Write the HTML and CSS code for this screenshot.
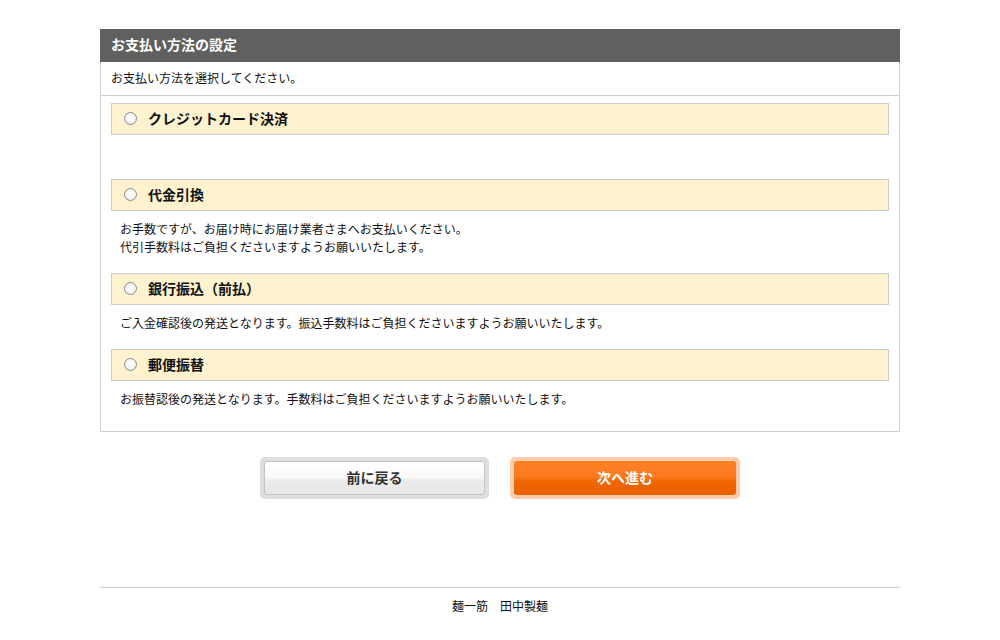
FILE: index.html
```html
<!DOCTYPE html>
<html lang="ja">
<head>
<meta charset="utf-8">
<title>お支払い方法の設定</title>
<link rel="stylesheet" href="styles.css">
</head>
<body>
<div class="page">
  <section class="panel">
    <h2 class="panel-title">お支払い方法の設定</h2>
    <p class="panel-lead">お支払い方法を選択してください。</p>
    <div class="methods">
      <div class="method">
        <label class="method-head"><span class="radio"></span><span class="method-name">クレジットカード決済</span></label>
        <div class="method-desc">&nbsp;</div>
      </div>
      <div class="method">
        <label class="method-head"><span class="radio"></span><span class="method-name">代金引換</span></label>
        <div class="method-desc">お手数ですが、お届け時にお届け業者さまへお支払いください。<br>代引手数料はご負担くださいますようお願いいたします。</div>
      </div>
      <div class="method">
        <label class="method-head"><span class="radio"></span><span class="method-name">銀行振込（前払）</span></label>
        <div class="method-desc">ご入金確認後の発送となります。振込手数料はご負担くださいますようお願いいたします。</div>
      </div>
      <div class="method">
        <label class="method-head"><span class="radio"></span><span class="method-name">郵便振替</span></label>
        <div class="method-desc">お振替認後の発送となります。手数料はご負担くださいますようお願いいたします。</div>
      </div>
    </div>
  </section>
  <div class="actions">
    <button class="btn btn-back" type="button"><span class="btn-inner">前に戻る</span></button>
    <button class="btn btn-next" type="button"><span class="btn-inner">次へ進む</span></button>
  </div>
  <footer class="footer">麺一筋　田中製麺</footer>
</div>
</body>
</html>
```

FILE: styles.css
```css
* { box-sizing: border-box; }
html, body { margin: 0; padding: 0; background: #fff; }
body {
  font-family: "Noto Sans CJK JP", "Noto Sans", sans-serif;
  color: #111;
  font-size: 12px;
}
.page {
  width: 800px;
  margin: 0 auto;
  padding-top: 29px;
}
.panel {
  border: 1px solid #cccccc;
  border-top: none;
}
.panel-title {
  margin: 0 -1px;
  background: #606060;
  color: #fff;
  font-size: 14px;
  font-weight: bold;
  height: 33px;
  line-height: 31px;
  padding: 0 11px;
}
.panel-lead {
  margin: 0;
  height: 34px;
  line-height: 31px;
  padding: 0 10px;
  border-bottom: 1px solid #cccccc;
  font-size: 12px;
}
.methods {
  padding: 7px 10px 6px 10px;
}
.method-head {
  display: flex;
  align-items: center;
  height: 32px;
  background: #fff3cf;
  border: 1px solid #cccccc;
  padding-left: 12px;
}
.radio {
  width: 13px;
  height: 13px;
  border-radius: 50%;
  border: 1px solid #8a8a8a;
  background: radial-gradient(circle at 50% 40%, #ffffff 0%, #f4f4f4 60%, #dcdcdc 100%);
  flex: none;
  margin-bottom: 2px;
}
.method-name {
  margin-left: 11px;
  font-size: 14px;
  font-weight: bold;
  color: #111;
  line-height: 18px;
  margin-bottom: 3px;
}
.method-desc {
  padding: 9px 9px 17px 9px;
  line-height: 18px;
  font-size: 12px;
}
.actions {
  display: flex;
  justify-content: center;
  gap: 21px;
  margin-top: 25px;
}
.btn {
  width: 229px;
  height: 42px;
  padding: 4px;
  border: none;
  border-radius: 5px;
  font-family: inherit;
  font-size: 14px;
  font-weight: bold;
  cursor: pointer;
  display: flex;
}
.btn-inner {
  flex: 1;
  display: flex;
  align-items: center;
  justify-content: center;
  border-radius: 3px;
  padding-bottom: 2px;
}
.btn-back { background: #dedede; }
.btn-back .btn-inner {
  border: 1px solid #c4c4c4;
  color: #333;
  background: linear-gradient(to bottom, #ffffff 0%, #f9f9f9 48%, #ececec 58%, #e6e6e6 100%);
}
.btn-next { background: #ffcda9; width: 230px; }
.btn-next .btn-inner {
  color: #fff;
  background: linear-gradient(to bottom, #ff8026 0%, #fc7a1f 46%, #f06600 60%, #ec5f00 100%);
}
.footer {
  margin-top: 88px;
  border-top: 1px solid #cccccc;
  text-align: center;
  padding-top: 9px;
  line-height: 17px;
  font-size: 12px;
  color: #111;
}
```
